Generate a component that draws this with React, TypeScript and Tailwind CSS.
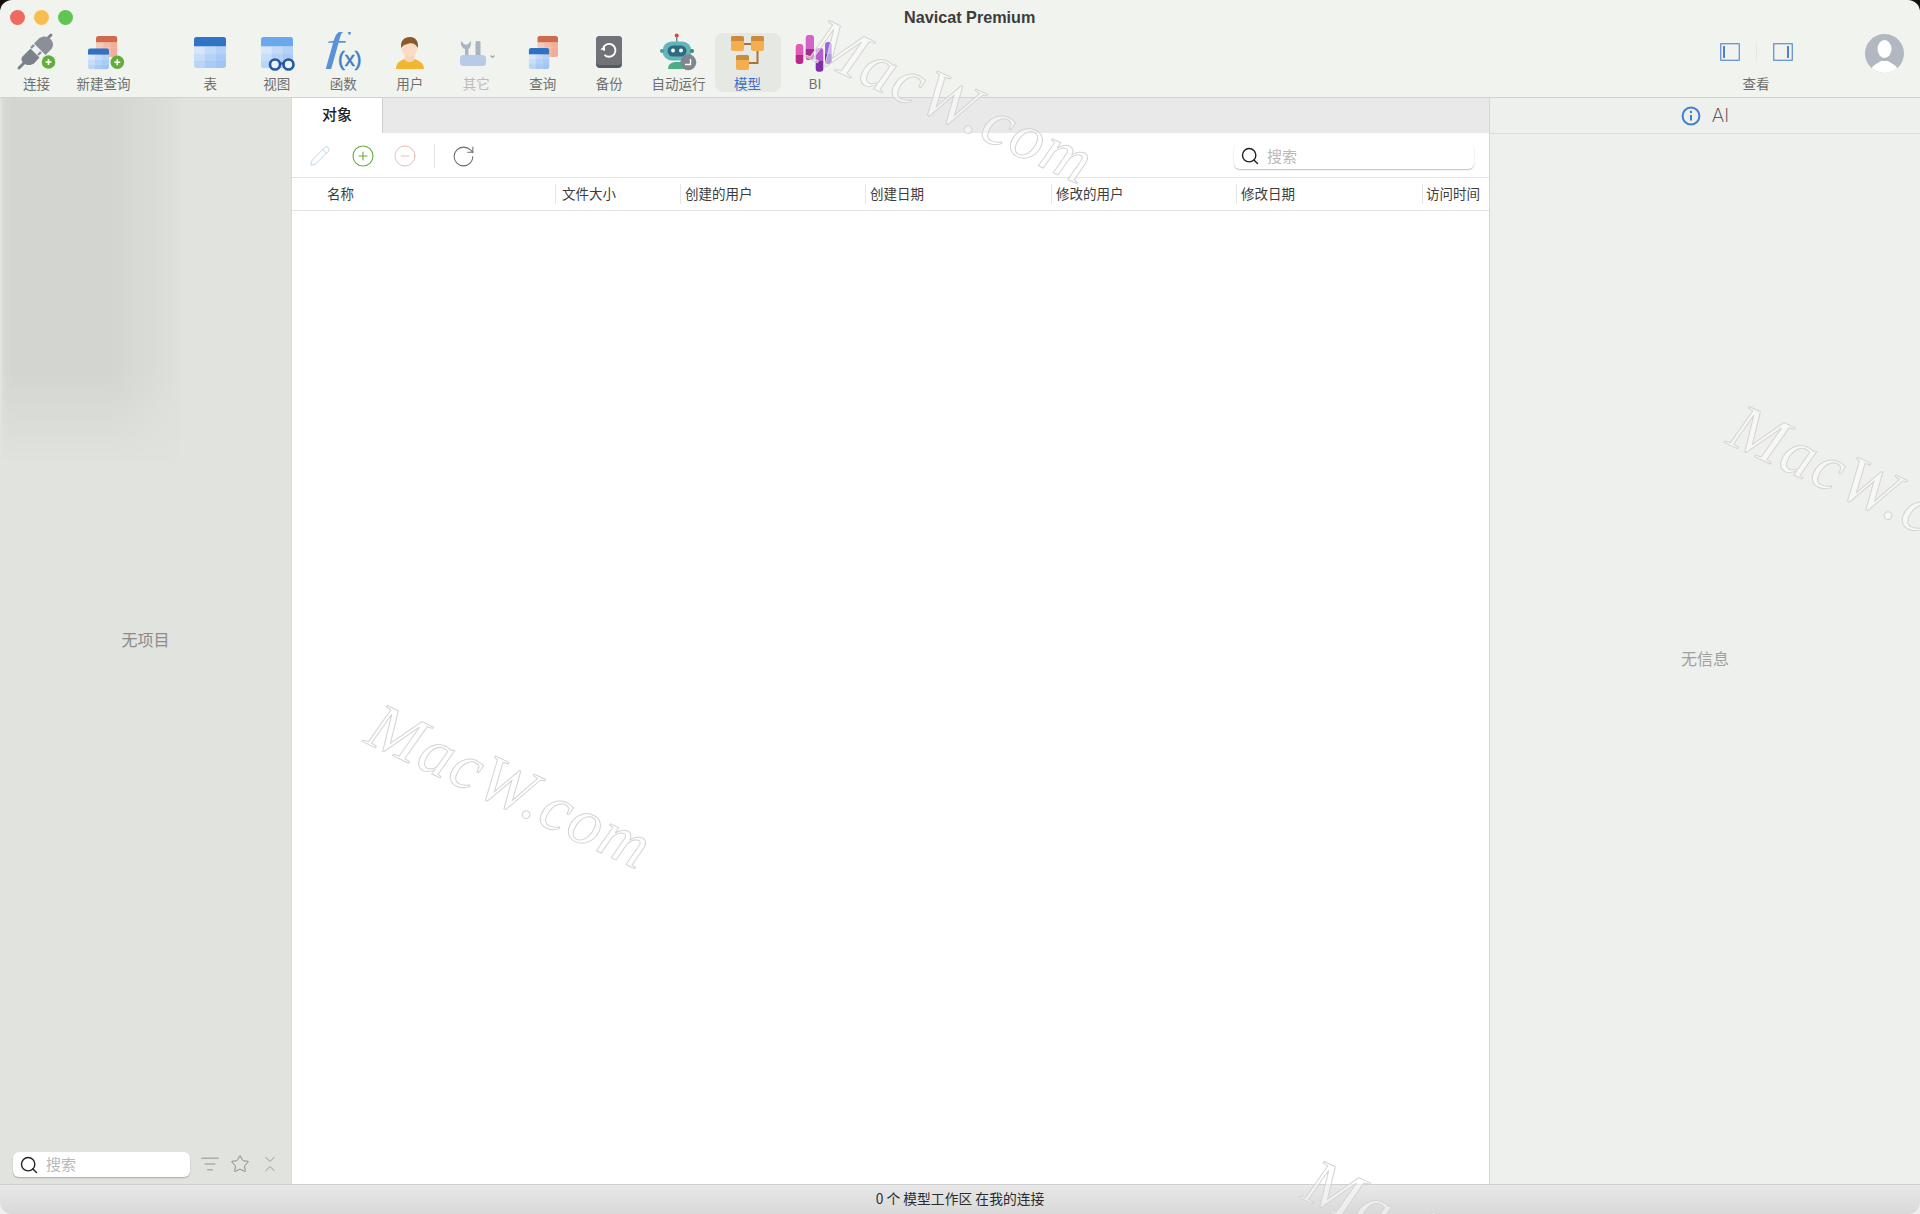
import { ChevronsDownUp, CircleMinus, CirclePlus, ListFilter, Pencil, RotateCw, Search, Star } from "lucide-react";
import type { ReactNode } from "react";

const font = "font-['Noto_Sans_CJK_SC','Liberation_Sans',sans-serif]";

// small table glyph used by several toolbar icons
function TableGlyph({ id, x, y, w, h, head, cells }: { id: string; x: number; y: number; w: number; h: number; head: string; cells: string[] }) {
  const headH = h * 0.3;
  const cw = w / 3;
  const ch = (h - headH) / 3;
  return (
    <g>
      <clipPath id={id}>
        <rect x={x} y={y} width={w} height={h} rx={2.5} />
      </clipPath>
      <g clipPath={"url(#" + id + ")"}>
        {cells.map((c, i) => (
          <rect key={i} x={x + (i % 3) * cw} y={y + headH + Math.floor(i / 3) * ch} width={cw + 0.2} height={ch + 0.2} fill={c} />
        ))}
        <rect x={x} y={y} width={w} height={headH} fill={head} />
      </g>
    </g>
  );
}

const blueCells = ["#d6e6fb", "#c3dbf9", "#b4d2f7", "#c8ddf9", "#b4d2f7", "#a8caf5", "#b9d5f8", "#a8caf5", "#a0c5f4"];
const redCells = ["#f6c8b8", "#f3bba8", "#f0ae9a", "#f6c8b8", "#f3bba8", "#f0ae9a", "#f6c8b8", "#f3bba8", "#f0ae9a"];

function GreenPlus({ cx, cy }: { cx: number; cy: number }) {
  return (
    <g>
      <circle cx={cx} cy={cy} r={6.8} fill="#62ad3c" />
      <path d={"M" + (cx - 3) + " " + cy + "h6M" + cx + " " + (cy - 3) + "v6"} stroke="#fff" strokeWidth={1.6} />
    </g>
  );
}

function Box({ children }: { children: ReactNode }) {
  return (
    <svg width="48" height="40" viewBox="0 0 48 40" className="shrink-0">
      {children}
    </svg>
  );
}

const IconConnect = () => (
  <Box>
    <path d="M6 36L12 30" stroke="#7d828a" strokeWidth="3" strokeLinecap="round" />
    <path d="M32 9L38 3" stroke="#7d828a" strokeWidth="3" strokeLinecap="round" />
    <path d="M9.5 24.5L17.5 16.5L26.5 25.5L21.5 31C18 34 13 33.5 10.5 31C8 29 8 26 9.5 24.5Z" fill="#7d828a" />
    <path d="M18 16L21 13M25 23L28 20" stroke="#8b9098" strokeWidth="2.4" />
    <path d="M21 11.5L26.5 6C30 3.5 34.5 4 37.5 7C40.5 10 41 14 38 17.5L32.5 23Z" fill="#8b9098" />
    <GreenPlus cx={35.5} cy={30} />
  </Box>
);

const IconNewQuery = () => (
  <Box>
    <TableGlyph id="nq1" x={16} y={4} w={21.3} h={21} head="#cf6a4b" cells={redCells} />
    <TableGlyph id="nq2" x={8} y={16.3} w={21} h={21} head="#2f72c4" cells={blueCells} />
    <GreenPlus cx={37.3} cy={30.3} />
  </Box>
);

const IconTable = () => (
  <Box>
    <TableGlyph id="tb" x={8} y={5} w={32} h={31} head="#2f74c6" cells={blueCells} />
  </Box>
);

const IconView = () => (
  <Box>
    <TableGlyph id="vw" x={8} y={5} w={32} h={31} head="#6aa8ee" cells={blueCells} />
    <circle cx={22} cy={32.5} r={5} fill="#eef3fa" stroke="#24589f" strokeWidth={2.6} />
    <circle cx={35.5} cy={32.5} r={5} fill="#eef3fa" stroke="#24589f" strokeWidth={2.6} />
    <path d="M26 31.5h5.5" stroke="#24589f" strokeWidth={2.2} />
  </Box>
);

const IconFunc = () => (
  <Box>
    <text transform="translate(6 28) scale(1.6 1)" fontFamily="'Liberation Serif',serif" fontStyle="italic" fontSize="42" fill="#5a92d8">f</text>
    <text x="19" y="34" fontFamily="'Liberation Sans',sans-serif" fontSize="20" stroke="#3f7cc8" strokeWidth="0.5" fill="#3f7cc8">(x)</text>
  </Box>
);

const IconUser = () => (
  <Box>
    <path d="M10 37C10 31 14 28.5 19 27H28C33 28.5 38 31 38 37Z" fill="#f2b632" />
    <path d="M18.5 21H28.5V27.5C26 31 21 31 18.5 27.5Z" fill="#f7d5b8" />
    <ellipse cx="23.5" cy="15" rx="8.3" ry="10" fill="#f9dcc3" />
    <path d="M15.2 16C14 8.5 18.5 5 24 5C29.5 5 33 9 31.8 16C30 11.5 26 10.5 23 11.5C20 12.5 17.5 12.5 15.2 16Z" fill="#8a5a2e" />
  </Box>
);

const IconOther = () => (
  <Box>
    <path d="M13 25V17C10 16 8.5 13 9 9L12.5 12.5H15.5L19 9C19.5 13 18 16 16.5 17V25Z" fill="#a9b4c2" />
    <rect x="23.5" y="9" width="5" height="17" rx="1.5" fill="#a9b4c2" />
    <rect x="8" y="23" width="26" height="11" rx="3.5" fill="#b7cbe8" />
    <path d="M38.5 23.5L40.5 25.5L42.5 23.5" fill="none" stroke="#a6a6a6" strokeWidth="1.2" />
  </Box>
);

const IconQuery = () => (
  <Box>
    <TableGlyph id="qr1" x={18.3} y={4} w={20.7} h={21} head="#cf6a4b" cells={redCells} />
    <TableGlyph id="qr2" x={9.7} y={16} w={20.7} h={21} head="#2f72c4" cells={blueCells} />
  </Box>
);

const IconBackup = () => (
  <Box>
    <rect x="11" y="4" width="26" height="32" rx="4" fill="#57595e" />
    <rect x="11" y="4" width="26" height="29" rx="4" fill="#6f7277" />
    <path d="M18.3 15.5A6.4 6.4 0 1 1 19.5 22.8" fill="none" stroke="#fff" strokeWidth="1.9" />
    <path d="M15.3 17.2L20 19V14Z" fill="#fff" />
  </Box>
);

const IconRobot = () => (
  <Box>
    <path d="M21.7 4v6" stroke="#5a8d95" strokeWidth="1.4" />
    <circle cx="21.7" cy="3.5" r="2" fill="#d9483f" />
    <path d="M13 37C13 32 17 30 21 30H26C30 30 33 32 33 37Z" fill="#4ab084" />
    <rect x="7.5" y="9.5" width="29" height="19" rx="9.5" fill="#62b5b8" />
    <circle cx="7" cy="19" r="2" fill="#4a9da2" />
    <circle cx="37" cy="19" r="2" fill="#3a8a6e" />
    <rect x="12.5" y="13.5" width="19" height="11" rx="5.5" fill="#2f6b80" />
    <circle cx="18" cy="18.5" r="1.9" fill="#fff" />
    <circle cx="26" cy="18.5" r="1.9" fill="#fff" />
    <circle cx="33.3" cy="30.3" r="8" fill="#80868e" />
    <path d="M35.5 27v5.5H30" fill="none" stroke="#fff" strokeWidth="1.4" />
  </Box>
);

function ModelBox({ x, y }: { x: number; y: number }) {
  return (
    <g>
      <rect x={x} y={y} width={13} height={15} rx={2} fill="#f4ad4f" />
      <path d={"M" + x + " " + (y + 5) + "v-3a2 2 0 0 1 2-2h9a2 2 0 0 1 2 2v3z"} fill="#c98b3e" />
    </g>
  );
}

const IconModel = () => (
  <Box>
    <path d="M19 12H27M33.5 19V31H25" fill="none" stroke="#a9743a" strokeWidth="2" />
    <ModelBox x={7} y={4} />
    <ModelBox x={27} y={4} />
    <ModelBox x={12} y={23} />
  </Box>
);

const biBars = [
  { x: 4.7, y: 12, w: 7.6, h: 20, id: "bi1", a: "#e25bb4", b: "#b82a8a" },
  { x: 14.7, y: 3, w: 8.3, h: 25, id: "bi2", a: "#d264c8", b: "#a52e8e" },
  { x: 24.7, y: 16, w: 7.6, h: 23.7, id: "bi3", a: "#b45cd0", b: "#7f2fa8" },
  { x: 34, y: 10, w: 6.7, h: 22, id: "bi4", a: "#9a68e0", b: "#6d3ab8" },
];

const IconBI = () => (
  <Box>
    <defs>
      {biBars.map((b) => (
        <linearGradient key={b.id} id={b.id} x1="0" y1="0" x2="0" y2="1">
          <stop offset="0.55" stopColor={b.a} />
          <stop offset="0.55" stopColor={b.b} />
        </linearGradient>
      ))}
    </defs>
    {biBars.map((b) => (
      <rect key={b.id} x={b.x} y={b.y} width={b.w} height={b.h} rx={3} fill={"url(#" + b.id + ")"} />
    ))}
  </Box>
);

function ToolItem({ label, icon, width = "w-[66.5px]", muted, active }: { label: string; icon: ReactNode; width?: string; muted?: boolean; active?: boolean }) {
  return (
    <div className={"relative flex h-[60px] flex-col items-center " + width}>
      {active && <div className="absolute left-0 right-0 top-[1px] bottom-0 rounded-lg bg-[#e6e8e3]" />}
      <div className="relative flex w-full justify-center">{icon}</div>
      <span className={"relative mt-[3px] whitespace-nowrap text-[13.5px] leading-[17px] " + (active ? "text-[#3a6fcb]" : muted ? "text-[#bcbdb9]" : "text-[#6f706d]")}>{label}</span>
    </div>
  );
}

function PaneIcon({ right }: { right?: boolean }) {
  return (
    <svg width="20" height="18" viewBox="0 0 20 18">
      <rect x="0.75" y="0.75" width="18.5" height="16.5" fill="none" stroke="#4f83ce" strokeWidth="1.1" />
      <rect x={right ? 14 : 3} y="3" width="2" height="12" fill="#4f83ce" />
    </svg>
  );
}

const columns = ["名称", "文件大小", "创建的用户", "创建日期", "修改的用户", "修改日期", "访问时间"];

function Watermark({ className }: { className: string }) {
  return (
    <div className={"pointer-events-none absolute origin-top-left rotate-[25deg] whitespace-nowrap font-['Liberation_Serif',serif] text-[66px] italic leading-none tracking-[1.5px] text-white/50 [-webkit-text-stroke:1px_#d4d4d4] " + className}>
      MacW.com
    </div>
  );
}

function SearchBox({ className }: { className: string }) {
  return (
    <div className={"flex items-center gap-[7px] rounded-[6px] bg-white pl-[6px] shadow-[0_1px_1.5px_rgba(0,0,0,0.25)] " + className}>
      <Search size={20} strokeWidth={1.7} className="text-[#222]" />
      <span className="text-[15px] text-[#b9b9b9]">搜索</span>
    </div>
  );
}

export default function App() {
  return (
    <div className={"h-screen w-screen overflow-hidden bg-[linear-gradient(#111_50%,#efefef_50%)] " + font}>
      <div className="relative flex h-full w-full flex-col overflow-hidden rounded-[12px] bg-[#f1f3ee]">
        {/* title bar */}
        <div className="flex h-[32px] shrink-0 items-center pl-[10px] pt-[2px]">
          <div className="flex gap-[9px]">
            <span className="size-[15px] rounded-full bg-[#ec6a5e]" />
            <span className="size-[15px] rounded-full bg-[#f5bf4f]" />
            <span className="size-[15px] rounded-full bg-[#61c554]" />
          </div>
          <span className="ml-[831px] font-['Liberation_Sans',sans-serif] text-[16.2px] font-bold text-[#3c3c3c]">Navicat Premium</span>
        </div>

        {/* toolbar */}
        <div className="flex h-[66px] shrink-0 items-start border-b border-[#d2d3d0] pl-[3px] pr-[16px]">
          <ToolItem label="连接" icon={<IconConnect />} width="w-[67px]" />
          <ToolItem label="新建查询" icon={<IconNewQuery />} width="w-[67px]" />
          <div className="ml-[40px] flex">
            <ToolItem label="表" icon={<IconTable />} />
            <ToolItem label="视图" icon={<IconView />} />
            <ToolItem label="函数" icon={<IconFunc />} />
            <ToolItem label="用户" icon={<IconUser />} />
            <ToolItem label="其它" icon={<IconOther />} muted />
            <ToolItem label="查询" icon={<IconQuery />} />
            <ToolItem label="备份" icon={<IconBackup />} />
            <ToolItem label="自动运行" icon={<IconRobot />} width="w-[72px]" />
            <ToolItem label="模型" icon={<IconModel />} width="w-[66px]" active />
            <ToolItem label="BI" icon={<IconBI />} width="w-[67px] ml-px" />
          </div>
          <div className="ml-auto flex w-[100px] flex-col items-center">
            <div className="flex h-[40px] items-center gap-[16px]">
              <PaneIcon />
              <span className="h-[18px] w-px bg-[#e4e6e1]" />
              <PaneIcon right />
            </div>
            <span className="mt-[3px] text-[13.5px] leading-[17px] text-[#6f706d]">查看</span>
          </div>
          <div className="ml-[59px] mt-[2px] flex size-[39px] items-end justify-center overflow-hidden rounded-full bg-[#b2b8c2]">
            <svg width="39" height="39" viewBox="0 0 39 39">
              <ellipse cx="19.5" cy="15" rx="7" ry="9" fill="#fff" />
              <path d="M5 39C6 31 12 30 16 27H23C27 30 33 31 34 39Z" fill="#fff" />
            </svg>
          </div>
        </div>

        {/* body */}
        <div className="flex min-h-0 flex-1">
          {/* left sidebar */}
          <div className="relative flex w-[292px] shrink-0 flex-col overflow-hidden border-r border-[#d9dbd6] bg-[#e1e3de]">
            <div className="absolute left-[2px] top-[-10px] h-[375px] w-[178px] bg-linear-to-r from-[#d3d5d0] from-[60%] to-[#dee0db] blur-[5px] [mask-image:linear-gradient(#000_76%,transparent)]" />
            <div className="relative flex flex-1 items-center justify-center pt-[28px] text-[16px] text-[#8b8c89]">无项目</div>
            <div className="relative flex h-[32px] shrink-0 items-start pl-[13px]">
              <SearchBox className="h-[25px] w-[177px]" />
              <div className="ml-[10px] flex items-center gap-[10px] pt-[2px] text-[#8a8b88]">
                <ListFilter size={20} strokeWidth={1.1} />
                <Star size={20} strokeWidth={1.2} />
                <ChevronsDownUp size={20} strokeWidth={1} />
              </div>
            </div>
          </div>

          {/* center */}
          <div className="flex min-w-0 flex-1 flex-col bg-white">
            <div className="flex h-[35px] shrink-0 bg-[#e9e9e9]">
              <div className="flex w-[91px] items-center justify-center border-r border-[#cfcfcf] bg-white pb-[3px] text-[15px] font-medium text-[#222]">对象</div>
            </div>
            <div className="flex h-[44px] shrink-0 items-center pl-[17px] pr-[15px] pt-[2px]">
              <Pencil size={22} strokeWidth={0.9} className="text-[#a8cde8]" />
              <CirclePlus size={24} strokeWidth={1.1} className="ml-[20px] text-[#62ad3c]" />
              <CircleMinus size={24} strokeWidth={1} className="ml-[18px] text-[#eebdb6]" />
              <span className="ml-[17px] h-[24px] w-px bg-[#e2e2e2]" />
              <RotateCw size={25} strokeWidth={1} className="ml-[16px] text-[#6c6c6c]" />
              <SearchBox className="ml-auto h-[25px] w-[240px]" />
            </div>
            <div className="grid h-[34px] shrink-0 grid-cols-[263px_125px_185px_186px_185px_186px_1fr] items-center border-y border-[#e3e3e3] pb-[1px]">
              {columns.map((c, i) => (
                <div key={c} className={"flex h-[20px] items-center whitespace-nowrap text-[13.5px] text-[#3c3c3c] " + (i === 0 ? "pl-[35px]" : i === 1 ? "border-l border-[#e6e6e6] pl-[6px]" : i === 6 ? "border-l border-[#e6e6e6] pl-[3px]" : "border-l border-[#e6e6e6] pl-[4px]")}>
                  {c}
                </div>
              ))}
            </div>
            <div className="flex-1" />
          </div>

          {/* right panel */}
          <div className="flex w-[431px] shrink-0 flex-col border-l border-[#d6d7d4] bg-[#eef0ed]">
            <div className="flex h-[36px] shrink-0 items-center justify-center gap-[11px] border-b border-[#dcddda]">
              <svg width="20" height="20" viewBox="0 0 20 20">
                <circle cx="10" cy="10" r="8.4" fill="none" stroke="#3f7fd0" strokeWidth="2" />
                <circle cx="10" cy="6" r="1.2" fill="#3f7fd0" />
                <path d="M10 9v5.5" stroke="#3f7fd0" strokeWidth="2" />
              </svg>
              <span className="font-['Inter',sans-serif] text-[19px] font-extralight leading-none text-[#444]">AI</span>
            </div>
            <div className="flex flex-1 items-center justify-center pb-[2px] text-[16px] text-[#a0a19e]">无信息</div>
          </div>
        </div>

        {/* status bar */}
        <div className="flex h-[30px] shrink-0 items-center justify-center border-t border-[#cfcfcf] bg-[linear-gradient(#e8e8e8,#d9d9d9)] pb-[3px] text-[13.8px] text-[#2c2c2c]">
          0 个 模型工作区 在我的连接
        </div>

        <Watermark className="left-[828px] top-[7px]" />
        <Watermark className="left-[386px] top-[692px]" />
        <Watermark className="left-[1748px] top-[393px]" />
        <Watermark className="left-[1323px] top-[1148px]" />
      </div>
    </div>
  );
}
